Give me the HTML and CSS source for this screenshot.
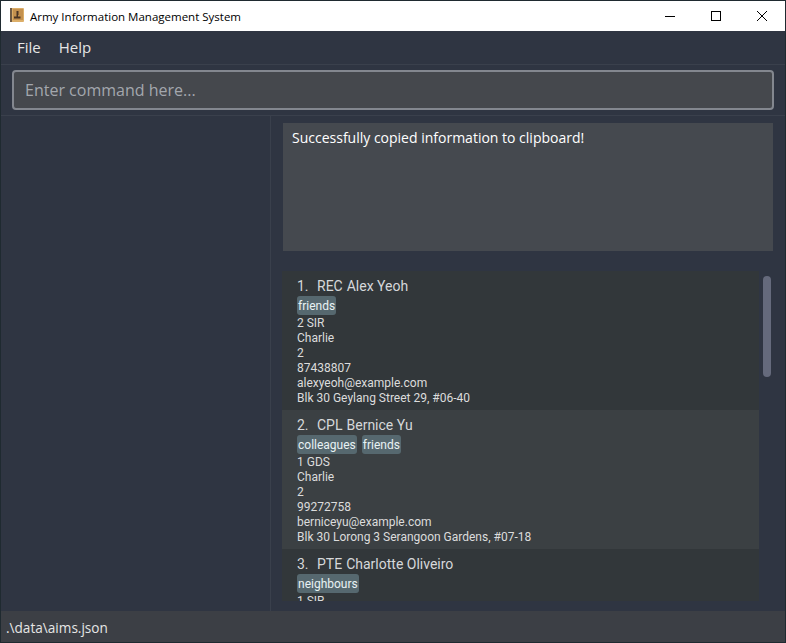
FILE: index.html
```
<!DOCTYPE html>
<html lang="en">
<head>
<meta charset="utf-8">
<title>Army Information Management System</title>
<link rel="stylesheet" href="styles.css">
</head>
<body>
<div class="window">
  <header class="titlebar">
    <svg class="app-icon" width="16" height="16" viewBox="0 0 16 16"><rect x="1" y="0" width="14" height="14" rx="1" fill="#dcae68"/><rect x="1" y="0" width="2" height="14" fill="#6f5a44"/><rect x="4" y="1" width="10" height="11" fill="#c4914f"/><path d="M7.500 3h2v4h-.5v1.500h2.500V10.500H5V8.500h2.500V7h0z" fill="#4a3524"/></svg>
    <span class="title">Army Information Management System</span>
    <div class="win-controls">
      <svg class="ctl" width="46" height="30" viewBox="0 0 46 30"><path d="M18 15.500h10" stroke="#000" fill="none"/></svg>
      <svg class="ctl" width="46" height="30" viewBox="0 0 46 30"><rect x="18.500" y="10.500" width="9" height="9" stroke="#000" fill="none"/></svg>
      <svg class="ctl" width="46" height="30" viewBox="0 0 46 30"><path d="M18 10l10 10M28 10l-10 10" stroke="#000" fill="none"/></svg>
    </div>
  </header>
  <nav class="menubar"><span class="menu-item">File</span><span class="menu-item">Help</span></nav>
  <section class="command-bar"><input class="command-input" placeholder="Enter command here..."></section>
  <main class="content">
    <aside class="sidebar"></aside>
    <section class="right">
      <div class="result">Successfully copied information to clipboard!</div>
      <div class="list-wrap">
        <div class="list">
          <article class="card">
            <div class="name"><span class="num">1.</span><span>REC</span><span>Alex Yeoh</span></div>
            <div class="tags"><span class="tag">friends</span></div>
            <div class="line">2 SIR</div><div class="line">Charlie</div><div class="line">2</div><div class="line">87438807</div><div class="line">alexyeoh@example.com</div><div class="line">Blk 30 Geylang Street 29, #06-40</div>
          </article>
          <article class="card alt">
            <div class="name"><span class="num">2.</span><span>CPL</span><span>Bernice Yu</span></div>
            <div class="tags"><span class="tag">colleagues</span><span class="tag">friends</span></div>
            <div class="line">1 GDS</div><div class="line">Charlie</div><div class="line">2</div><div class="line">99272758</div><div class="line">berniceyu@example.com</div><div class="line">Blk 30 Lorong 3 Serangoon Gardens, #07-18</div>
          </article>
          <article class="card">
            <div class="name"><span class="num">3.</span><span>PTE</span><span>Charlotte Oliveiro</span></div>
            <div class="tags"><span class="tag">neighbours</span></div>
            <div class="line">1 SIR</div>
          </article>
        </div>
        <div class="scrollbar"><div class="thumb"></div></div>
      </div>
    </section>
  </main>
  <footer class="status">.\data\aims.json</footer>
</div>
</body>
</html>
```

FILE: styles.css
```
* { box-sizing: border-box; }
html, body { margin: 0; height: 100%; }
body { background: #2f3542; font-family: "Open Sans", "Liberation Sans", sans-serif; }
.window { width: 786px; height: 643px; display: flex; flex-direction: column; border: 1px solid #1f2a30; overflow: hidden; background: #2f3542; }
.titlebar { height: 30px; flex: none; background: #fff; display: flex; align-items: center; padding-left: 8px; }
.app-icon { flex: none; }
.title { font-size: 11.500px; color: #000; margin-left: 5px; }
.win-controls { margin-left: auto; display: flex; }
.ctl { display: block; }
.menubar { height: 34px; flex: none; display: flex; align-items: center; padding: 0 0 2px 6px; border-bottom: 1px solid #3a404c; }
.menu-item { color: #e6e6e6; font-size: 15px; padding: 0 10px; margin-right: -2px; }
.command-bar { height: 51px; flex: none; padding: 5px 11px 0; border-bottom: 1px solid #3a404c; }
.command-input { display: block; width: 762px; height: 40px; background: #45484d; border: 2px solid #83878f; border-radius: 4px; padding: 0 11px; color: #fff; font: 16px "Open Sans", sans-serif; outline: none; }
.command-input::placeholder { color: #a3a7ad; opacity: 1; }
.content { flex: 1; display: flex; min-height: 0; }
.sidebar { width: 270px; flex: none; border-right: 1px solid #3a404c; }
.right { flex: 1; min-width: 0; padding: 7px 0 10px 11px; display: flex; flex-direction: column; }
.result { width: 490px; height: 128px; margin-left: 1px; background: #45494f; color: #fff; font-size: 14px; padding: 5px 9px; flex: none; }
.list-wrap { flex: 1; min-height: 0; margin-top: 20px; display: flex; }
.list { width: 477px; overflow: hidden; background: #32373a; font-family: Roboto, sans-serif; }
.card { height: 139px; padding: 6px 15px 0; background: #32373a; }
.card.alt { background: #3b4043; }
.name { display: flex; gap: 4px; font-size: 14px; line-height: 19px; color: #d6d8da; height: 19px; }
.num { width: 16px; }
.tags { display: flex; gap: 5px; height: 20px; }
.tag { height: 19px; line-height: 21px; padding: 0 1px; border-radius: 3px; background: #56686f; color: #e8f2f4; font-size: 12px; }
.line { font-size: 12px; line-height: 15px; color: #dcdcdc; }
.scrollbar { width: 14px; padding: 5px 0 0 4px; }
.thumb { width: 8px; height: 101px; border-radius: 4px; background: #656a7c; }
.status { height: 31px; flex: none; background: #3c3f45; color: #e6e6e6; font-size: 13.600px; line-height: 33px; padding-left: 5px; }
```
